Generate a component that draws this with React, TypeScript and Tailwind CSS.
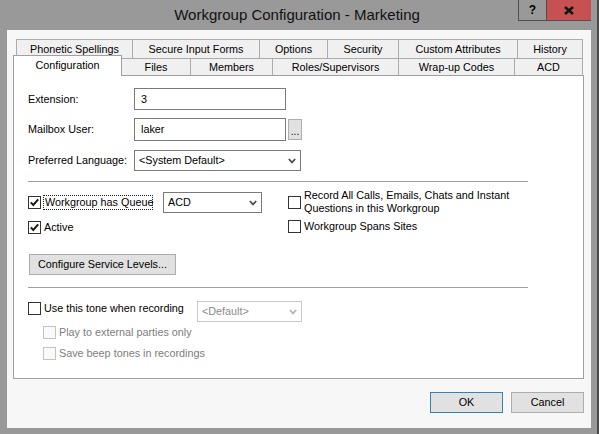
import React from 'react'

const Check = ({ checked = false, disabled = false }: { checked?: boolean; disabled?: boolean }) => (
  <span
    className={`w-[13px] h-[13px] shrink-0 border flex items-center justify-center ${
      disabled ? 'border-[#c4c4c4] bg-[#fafafa]' : 'border-[#333] bg-white'
    }`}
  >
    {checked && (
      <svg width='11' height='11' viewBox='0 0 11 11'>
        <path d='M1.8 5.4 L4.3 8 L9.2 2.4' fill='none' stroke='#1a1a1a' strokeWidth='2' />
      </svg>
    )}
  </span>
)

const Chevron = ({ color = '#4d4d4d' }: { color?: string }) => (
  <svg width='8' height='6' viewBox='0 0 8 6' className='shrink-0'>
    <path d='M0.8 1 L4 4.4 L7.2 1' fill='none' stroke={color} strokeWidth='1.8' />
  </svg>
)

const Select = ({ w, value, disabled = false }: { w: string; value: string; disabled?: boolean }) => (
  <div
    className={`${w} h-[21px] border flex items-center justify-between pl-[4px] pr-[4px] ${
      disabled ? 'border-[#c9c9c9] text-[#8a8a8a]' : 'border-[#7a7a7a] bg-white'
    }`}
  >
    <span>{value}</span>
    <Chevron color={disabled ? '#b5b5b5' : '#4d4d4d'} />
  </div>
)

const row1 = [
  ['Phonetic Spellings', 'w-[116px]'],
  ['Secure Input Forms', 'w-[127px]'],
  ['Options', 'w-[68px]'],
  ['Security', 'w-[71px]'],
  ['Custom Attributes', 'w-[119px]'],
  ['History', 'w-[66px]'],
]

const row2 = [
  ['Files', 'w-[68px]'],
  ['Members', 'w-[82px]'],
  ['Roles/Supervisors', 'w-[126px]'],
  ['Wrap-up Codes', 'w-[116px]'],
  ['ACD', 'w-[69px]'],
]

export default function App() {
  return (
    <div className="w-[599px] h-[434px] bg-[#999999] border-r-2 border-[#4a4a4a] relative overflow-hidden font-['Liberation_Sans',Arial,sans-serif] text-[10.8px] text-black">
      {/* title bar */}
      <div className='h-[30px] flex items-center justify-center pr-[3px]'>
        <span className='text-[15px] text-[#111]'>Workgroup Configuration - Marketing</span>
      </div>
      <div className='absolute top-0 left-[518px] flex h-[21px] border-l border-b border-[#4f4f4f]'>
        <div className='w-[28px] h-full border-r border-[#4f4f4f] flex items-center justify-center text-[12px] font-bold'>?</div>
        <div className='w-[44px] h-full bg-[#c75050] flex items-center justify-center'>
          <svg width='10' height='9' viewBox='0 0 10 9'>
            <path d='M1 1 L9 8 M9 1 L1 8' stroke='#111' strokeWidth='2.4' />
          </svg>
        </div>
      </div>

      {/* client */}
      <div className='ml-[7px] w-[584px] h-[398px] bg-[#f7f7f7] pt-[9px] pl-[6px] pr-[7px]'>
        {/* tabs */}
        <div className='flex ml-[3px] h-[19px]'>
          {row1.map(([t, w], i) => (
            <div
              key={t}
              className={`${w} h-full bg-[#f0f0f0] border-t border-l border-[#acacac] flex items-center justify-center ${
                i === row1.length - 1 ? 'border-r' : ''
              }`}
            >
              {t}
            </div>
          ))}
        </div>
        <div className='flex -mt-[3px] h-[20px] items-start'>
          <div className='w-[109px] h-[21px] bg-white border-t border-l border-r border-[#a0a0a0] flex items-center justify-center pb-[2px] relative z-10'>
            Configuration
          </div>
          {row2.map(([t, w], i) => (
            <div
              key={t}
              className={`${w} mt-[3px] h-[17px] bg-[#f0f0f0] border-t border-[#acacac] flex items-center justify-center ${
                i === row2.length - 1 ? 'border-r' : ''
              } ${i === 0 ? '' : 'border-l'}`}
            >
              {t}
            </div>
          ))}
        </div>

        {/* panel */}
        <div className='h-[304px] bg-white border border-[#a0a0a0] pl-[14px] pt-[12px]'>
          <div className='flex items-center h-[22px]'>
            <span className='w-[106px]'>Extension:</span>
            <div className='w-[152px] h-[22px] border border-[#7a7a7a] pl-[6px] flex items-center'>3</div>
          </div>
          <div className='flex items-center h-[23px] mt-[8px]'>
            <span className='w-[106px]'>Mailbox User:</span>
            <div className='w-[152px] h-[23px] border border-[#7a7a7a] pl-[6px] flex items-center'>laker</div>
            <div className='ml-[2px] w-[14px] h-[21px] bg-[#e1e1e1] border border-[#adadad] flex items-end justify-center pb-[2px] leading-none text-[10px]'>...</div>
          </div>
          <div className='flex items-center h-[21px] mt-[9px]'>
            <span className='w-[106px]'>Preferred Language:</span>
            <Select w='w-[167px]' value='<System Default>' />
          </div>

          <div className='mt-[10px] w-[500px] h-px bg-[#a0a0a0]' />

          <div className='flex mt-[10px]'>
            <div className='w-[260px]'>
              <div className='flex items-center h-[21px]'>
                <Check checked />
                <span className='ml-[2px] w-[110px] h-[15px] flex items-center pl-px border border-dotted border-[#222] whitespace-nowrap'>
                  Workgroup has Queue
                </span>
                <div className='ml-[10px]'>
                  <Select w='w-[99px]' value='ACD' />
                </div>
              </div>
              <div className='flex items-center h-[13px] mt-[8px]'>
                <Check checked />
                <span className='ml-[3px]'>Active</span>
              </div>
            </div>
            <div>
              <div className='flex items-start'>
                <span className='mt-[4px]'>
                  <Check />
                </span>
                <span className='ml-[3px] -mt-[3px] leading-[13px]'>
                  Record All Calls, Emails, Chats and Instant
                  <br />
                  Questions in this Workgroup
                </span>
              </div>
              <div className='flex items-center h-[13px] mt-[5px]'>
                <Check />
                <span className='ml-[3px]'>Workgroup Spans Sites</span>
              </div>
            </div>
          </div>

          <div className='mt-[20px] ml-[1px] w-[147px] h-[21px] bg-[#e1e1e1] border border-[#adadad] flex items-center justify-center'>
            Configure Service Levels...
          </div>

          <div className='mt-[12px] w-[500px] h-px bg-[#a0a0a0]' />

          <div className='flex items-start mt-[13px] h-[21px]'>
            <div className='w-[169px] flex items-center h-[13px] mt-[1px]'>
              <Check />
              <span className='ml-[3px]'>Use this tone when recording</span>
            </div>
            <Select w='w-[105px]' value='<Default>' disabled />
          </div>
          <div className='flex items-center h-[13px] mt-[4px] ml-[15px] text-[#7d7d7d]'>
            <Check disabled />
            <span className='ml-[3px]'>Play to external parties only</span>
          </div>
          <div className='flex items-center h-[13px] mt-[8px] ml-[15px] text-[#7d7d7d]'>
            <Check disabled />
            <span className='ml-[3px]'>Save beep tones in recordings</span>
          </div>
        </div>

        {/* dialog buttons */}
        <div className='flex justify-end gap-[8px] mt-[13px]'>
          <div className='w-[73px] h-[21px] bg-[#e1e1e1] border border-[#3c7fb1] flex items-center justify-center'>OK</div>
          <div className='w-[73px] h-[21px] bg-[#e1e1e1] border border-[#adadad] flex items-center justify-center'>Cancel</div>
        </div>
      </div>
    </div>
  )
}
